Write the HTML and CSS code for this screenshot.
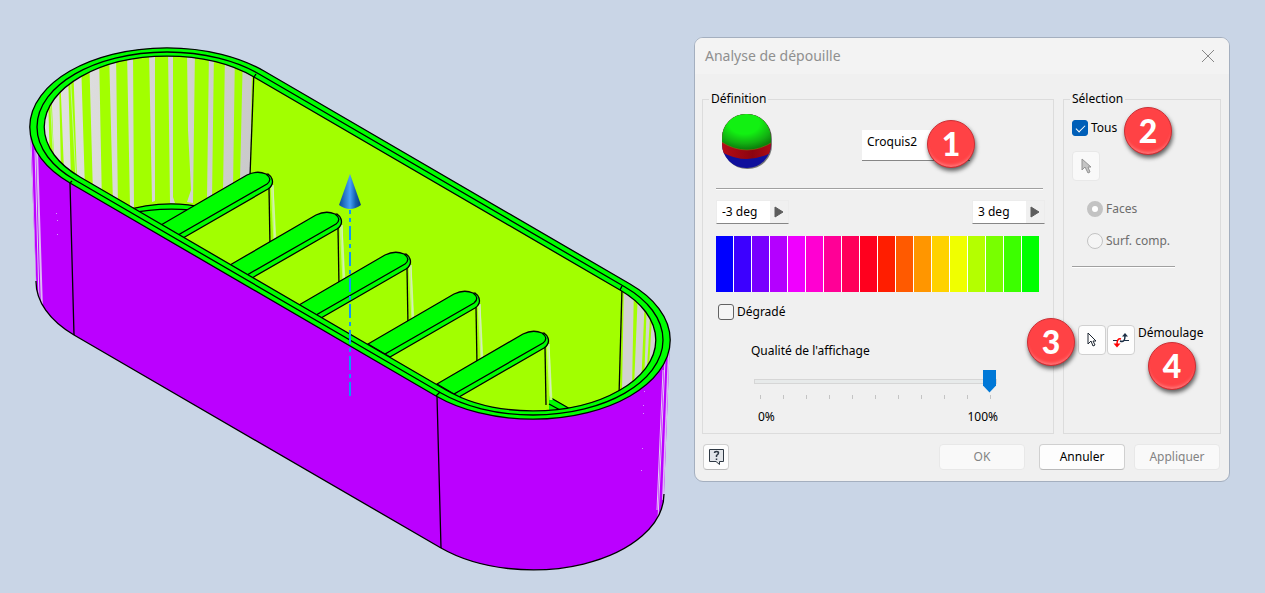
FILE: index.html
```
<!DOCTYPE html>
<html lang="fr">
<head>
    <meta charset="UTF-8">
    <title>Analyse de dépouille</title>
    <link rel="stylesheet" href="styles.css">
</head>
<body>
    <main class="workspace">
        <svg class="model" viewBox="0 0 694 592" preserveAspectRatio="xMinYMin meet" role="img" aria-label="Pièce">
            <defs>
                <clipPath id="inside">
                    <path d="M80 177A100 57.7 0 0 1 254 77L620 290A100 57.7 0 0 1 446 390Z"/>
                </clipPath>
                <clipPath id="skin">
                    <path d="M30 127L36 281A131 76 0 0 0 74 335L441 548A131 76 0 0 0 664 494L670 340Z"/>
                </clipPath>
                <linearGradient id="cone" x1="0" x2="1" y1="0" y2="0">
                    <stop offset="0" stop-color="#0a4a94"/>
                    <stop offset="0.5" stop-color="#45a0f8"/>
                    <stop offset="0.75" stop-color="#1560b0"/>
                    <stop offset="1" stop-color="#073a78"/>
                </linearGradient>
                <linearGradient id="bare" gradientUnits="userSpaceOnUse" x1="45" x2="250" y1="0" y2="0">
                    <stop offset="0" stop-color="#e2e2e2"/>
                    <stop offset="1" stop-color="#cacaca"/>
                </linearGradient>
                <g id="rib">
                    <path class="lime" d="M183 238L268 187L270 262L230 262Z"/>
                    <path d="M272 185L275 241" stroke="#c4ff70" stroke-width="3"/>
                    <path d="M273 185L275 238" stroke="#d5e8c8"/>
                    <path class="green edge" d="M178 235L183 238L268 189Q274 185 272 179Q271 176 268 174L258 177Z"/>
                    <path class="green edge" d="M161 225L247 175Q257 170 266 174Q273 179 267 184L178 235Z"/>
                    <path class="edge" d="M269 188L270 246"/>
                </g>
            </defs>

            <!-- outer skin -->
            <path fill="#bb00ff" d="M30 127L36 281A131 76 0 0 0 74 335L441 548A131 76 0 0 0 664 494L670 340Z"/>
            <g clip-path="url(#skin)" fill="none">
                <path d="M31 140L36 290M35 150L39 300" stroke="#e5ccf5"/>
                <path d="M37 150L42 310" stroke="#ddb8f5" stroke-width="2"/>
                <path d="M669 350L663 500" stroke="#ddb8f5" stroke-width="2"/>
                <path d="M665 360L658 520M663 370L657 510" stroke="#e5ccf5"/>
            </g>
            <path class="edge" d="M36 281A131 76 0 0 0 74 335L441 548A131 76 0 0 0 664 494"/>
            <path class="edge" d="M70 183L74 335M437 396L441 548"/>
            <path d="M56 213h1v1h-1zM57 220h1v1h-1zM57 234h1v1h-1zM644 391h1v1h-1zM643 405h1v1h-1zM643 413h1v1h-1zM642 448h1v1h-1zM641 470h1v1h-1z" fill="#d98cff"/>

            <!-- rim -->
            <path class="green edge" d="M70 183A100 57.7 0 0 1 264 71L630 284A100 57.7 0 0 1 436 396Z"/>
            <path class="lime" d="M80 177A100 57.7 0 0 1 254 77L620 290A100 57.7 0 0 1 446 390Z"/>

            <g clip-path="url(#inside)">
                <g fill="url(#bare)">
                    <path d="M43 90L48 90L50 170L44 170ZM51 80L59 80L61 172L54 160Z"/>
                    <path d="M60 70L68 70L71 180L64 172ZM73 60L81 60L85 190L77 180Z"/>
                    <path d="M89 50L99 50L102 205L93 195ZM109 50L116 50L118 210L113 205Z"/>
                    <path d="M127 50L133 50L134 207L130 207ZM149 50L155 50L155 201L152 202Z"/>
                    <path d="M168 50L173 50L173 197L175 203H170ZM187 50L195 50L193 203L187 202L191 190L188 130Z"/>
                    <path d="M209 50L214 50L212 200L207 200ZM225 50L235 50L233 190L223 195ZM243 50L252 70L250 176L240 180Z"/>
                </g>
                <path d="M70 70L76 180M50 90L54 170" fill="none" stroke="#bff59a"/>
                <path class="edge" d="M254 70L250 176"/>
                <path class="green edge" d="M120 212Q165 198 205 208L180 240Z"/>
                <path class="edge" d="M125 214Q160 207 190 210"/>
                <path d="M624 280L634 285L632 388L622 392ZM638 290L645 295L641 388L634 388ZM647 298H664L656 385L644 385Z" fill="#d2d2d2"/>
                <path d="M652 300L647 385" stroke="#a2ff00" stroke-width="2"/>
                <path class="edge" d="M622 288L619 396"/>
                <path class="green" d="M549 396L572 410H549Z"/>
                <path class="edge" d="M551 398L572 410M549 404L562 411"/>
                <use href="#rib"/>
                <use href="#rib" x="69" y="40"/>
                <use href="#rib" x="138" y="80"/>
                <use href="#rib" x="207" y="119"/>
                <use href="#rib" x="276" y="159"/>
            </g>

            <path class="edge" d="M80 177A100 57.7 0 0 1 254 77L620 290A100 57.7 0 0 1 446 390Z"/>
            <path class="edge" d="M75 180A100 57.7 0 0 1 259 74L625 287A100 57.7 0 0 1 441 393Z"/>
            <path class="edge" d="M254 77L256 74M620 290L622 286M70 183L72 181M436 396L440 392"/>

            <!-- pull direction -->
            <path d="M350 210V396" stroke="#0f96f5" stroke-width="2" stroke-dasharray="4 4 4 4 14 4 4 4 14 4 4 4 14 4 4 4 14 4 4 4 14 4 4 4 14 4 4 4 20"/>
            <path d="M350 174L339 205Q350 213 361 205Z" fill="url(#cone)"/>
        </svg>

        <form class="dialog">
            <header class="titlebar">
                <h1>Analyse de dépouille</h1>
                <button type="button" class="close" aria-label="Fermer">
                    <svg width="14" height="14" viewBox="0 0 14 14"><path d="M1 1L13 13M13 1L1 13" fill="none" stroke="#868686"/></svg>
                </button>
            </header>

            <div class="groups">
                <fieldset class="group definition">
                    <legend>Définition</legend>
                    <div class="source">
                        <svg width="54" height="58" viewBox="0 0 54 58" aria-hidden="true">
                            <defs>
                                <radialGradient id="top" cx="0.45" cy="0.3" r="0.7">
                                    <stop offset="0.4" stop-color="#12f012"/>
                                    <stop offset="0.75" stop-color="#12b012"/>
                                    <stop offset="1" stop-color="#0a7a0a"/>
                                </radialGradient>
                                <linearGradient id="band" x1="0" x2="1" y1="0" y2="0">
                                    <stop offset="0" stop-color="#b80c18"/>
                                    <stop offset="0.6" stop-color="#8c0410"/>
                                    <stop offset="1" stop-color="#b00c18"/>
                                </linearGradient>
                                <clipPath id="ball"><rect x="2" y="2" width="49" height="54" rx="24" ry="24"/></clipPath>
                            </defs>
                            <rect x="3" y="3" width="49" height="54" rx="24" ry="24" fill="#777"/>
                            <g clip-path="url(#ball)">
                                <path d="M0 0H54V58H0Z" fill="#10109c"/>
                                <path d="M0 0H54V39Q27 55 0 39Z" fill="url(#band)"/>
                                <path d="M0 0H54V29Q27 47 0 29Z" fill="url(#top)" stroke="#8a7a10" stroke-width="0.5"/>
                            </g>
                        </svg>
                        <div class="sketch">
                            <input type="text" class="sketch-name" aria-label="Esquisse" value="Croquis2">
                            <span class="badge badge-1">1</span>
                        </div>
                    </div>
                    <hr>
                    <div class="angles">
                        <div class="angle">
                            <input type="text" aria-label="Angle minimal" value="-3 deg">
                            <button type="button" aria-label="Options de l'angle minimal"><svg width="10" height="12" viewBox="0 0 10 12"><path d="M1 1L9 6L1 11Z" fill="#5c5c5c" stroke="#5c5c5c" stroke-linejoin="round"/></svg></button>
                        </div>
                        <div class="angle">
                            <input type="text" aria-label="Angle maximal" value="3 deg">
                            <button type="button" aria-label="Options de l'angle maximal"><svg width="10" height="12" viewBox="0 0 10 12"><path d="M1 1L9 6L1 11Z" fill="#5c5c5c" stroke="#5c5c5c" stroke-linejoin="round"/></svg></button>
                        </div>
                    </div>
                    <div class="spectrum">
                        <i style="background:#0000ff"></i>
                        <i style="background:#3c00ff"></i>
                        <i style="background:#7800ff"></i>
                        <i style="background:#b400ff"></i>
                        <i style="background:#f000ff"></i>
                        <i style="background:#ff00d2"></i>
                        <i style="background:#ff0096"></i>
                        <i style="background:#ff005a"></i>
                        <i style="background:#ff001e"></i>
                        <i style="background:#ff1e00"></i>
                        <i style="background:#ff5a00"></i>
                        <i style="background:#ff9600"></i>
                        <i style="background:#ffd200"></i>
                        <i style="background:#f0ff00"></i>
                        <i style="background:#b4ff00"></i>
                        <i style="background:#78ff00"></i>
                        <i style="background:#3cff00"></i>
                        <i style="background:#00ff00"></i>
                    </div>
                    <label class="option gradient"><input type="checkbox">Dégradé</label>
                    <div class="quality">
                        <label for="quality">Qualité de l'affichage</label>
                        <input type="range" id="quality" min="0" max="100" value="100">
                        <div class="ticks"><i></i><i></i><i></i><i></i><i></i><i></i><i></i><i></i><i></i><i></i><i></i></div>
                        <div class="scale"><span>0%</span><span>100%</span></div>
                    </div>
                </fieldset>

                <fieldset class="group selection">
                    <legend>Sélection</legend>
                    <div class="all">
                        <label class="option"><input type="checkbox" checked>Tous</label>
                        <span class="badge badge-2">2</span>
                    </div>
                    <button type="button" class="tool" disabled aria-label="Sélectionner les faces">
                        <svg width="12" height="18" viewBox="0 0 12 18"><path d="M2 2V13L5 10L8 16L10 15L8 10H11Z" fill="#c4c4c4" stroke="#949494"/></svg>
                    </button>
                    <div class="kinds">
                        <label class="option off"><input type="radio" name="kind" checked disabled>Faces</label>
                        <label class="option off"><input type="radio" name="kind" disabled>Surf. comp.</label>
                    </div>
                    <hr>
                    <div class="pull">
                        <span class="badge badge-3">3</span>
                        <button type="button" class="tool" aria-label="Direction de démoulage">
                            <svg width="12" height="18" viewBox="0 0 12 18"><path d="M2 2V13L5 10L7 15L9 14L7 10H10Z" fill="#fff" stroke="#1c2530"/></svg>
                        </button>
                        <button type="button" class="tool" aria-label="Inverser">
                            <svg width="18" height="18" viewBox="0 0 18 18">
                                <path d="M1 9.500H6M12 9.500H17" stroke="#1c2f45"/>
                                <path d="M8 10Q13 12 13 5" fill="none" stroke="#1c2f45" stroke-width="1.5"/>
                                <path d="M9 8Q5 7 5 13" fill="none" stroke="#f00" stroke-width="1.5"/>
                                <path d="M10 5.500L13 2L16 5.500Z" fill="#1c2f45"/>
                                <path d="M1.500 12.500H8.500L5 16.500Z" fill="#f00"/>
                            </svg>
                        </button>
                        <span class="pull-name">Démoulage</span>
                        <span class="badge badge-4">4</span>
                    </div>
                </fieldset>
            </div>

            <footer class="actions">
                <button type="button" class="help" aria-label="Aide">
                    <svg width="17" height="18" viewBox="0 0 17 18"><path d="M1.500 1.500H15.500V13.500H11.500V16.500L8 13.500H1.500Z" fill="#e3e6ea" stroke="#2f3944"/><path d="M6.500 5Q6.500 3.500 8.500 3.500Q10.500 3.500 10.500 5Q10.500 6 8.500 7.500V9M8.500 10.500V12" fill="none" stroke="#2f3944" stroke-width="1.500"/></svg>
                </button>
                <button type="submit" class="ok" disabled>OK</button>
                <button type="button">Annuler</button>
                <button type="button" disabled>Appliquer</button>
            </footer>
        </form>
    </main>
</body>
</html>
```
FILE: styles.css
```
* {
    box-sizing: border-box;
}

body {
    margin: 0;
    background: #c9d5e6;
    font-family: "Noto Sans", "Open Sans", sans-serif;
    font-size: 12px;
    line-height: 16px;
    color: #000;
}

button, input {
    font: inherit;
    color: inherit;
}

.workspace {
    display: flex;
    align-items: flex-start;
}

/* 3D view */
.model {
    flex: 1;
    min-width: 0;
}

.green {
    fill: #00ff00;
}

.lime {
    fill: #a2ff00;
}

.edge {
    stroke: #000;
    stroke-width: 1.3;
}

.edge:not(.green) {
    fill: none;
}

/* dialog window */
.dialog {
    flex: 0 0 536px;
    margin: 37px 35px 0 0;
    background: #f0f0f0;
    border: 1px solid #a4afbf;
    border-radius: 9px;
    overflow: hidden;
}

.titlebar {
    display: flex;
    align-items: center;
    justify-content: space-between;
    height: 36px;
    padding: 0 14px 0 10px;
    background: #f3f3f3;
}

.titlebar h1 {
    margin: 0;
    font-size: 14px;
    font-weight: normal;
    color: #8f8f8f;
}

.close {
    display: flex;
    padding: 0;
    border: none;
    background: none;
}

.groups {
    display: flex;
    gap: 9px;
    padding: 17px 8px 0 7px;
}

.group {
    min-width: 0;
    margin: 0;
    padding: 0;
    border: 1px solid #dcdcdc;
}

.group legend {
    padding: 0 2px;
}

.group hr {
    margin: 0;
    border: none;
    border-top: 1px solid #a0a0a0;
    border-bottom: 1px solid #fff;
}

.definition {
    flex: 1;
    padding: 5px 10px 8px 13px;
}

.definition legend {
    margin-left: -7px;
}

.selection {
    flex: 0 0 158px;
    padding: 13px 9px 0 8px;
}

.selection legend {
    margin-left: -2px;
}

.source {
    display: flex;
    justify-content: space-between;
    height: 76px;
    padding: 0 73px 0 4px;
}

.sketch {
    position: relative;
    padding-top: 18px;
}

.sketch-name {
    width: 108px;
    height: 31px;
    padding: 0 5px 8px;
    border: none;
    border-bottom: 1px solid #868686;
    background: #fff;
}

.angles {
    display: flex;
    justify-content: space-between;
    margin: 10px -2px 12px 0;
}

.angle {
    display: flex;
    width: 73px;
    height: 24px;
    border: 1px solid #ececec;
    border-bottom-color: #868686;
}

.angle input {
    flex: 1;
    min-width: 0;
    padding: 0 5px;
    border: none;
    background: #fff;
}

.angle button {
    display: flex;
    align-items: center;
    justify-content: center;
    width: 18px;
    padding: 0;
    border: none;
    background: #f0f0f0;
}

.spectrum {
    display: flex;
    gap: 1px;
    height: 56px;
    margin-right: 4px;
    background: #fff;
}

.spectrum i {
    flex: 1;
}

.option {
    display: flex;
    align-items: center;
    gap: 3px;
}

.option input {
    appearance: none;
    flex: none;
    width: 16px;
    height: 16px;
    margin: 0;
    border: 1px solid #626262;
    border-radius: 3px;
    background: #f5f5f5;
}

.option input[type="checkbox"]:checked {
    display: grid;
    place-items: center;
    border-color: #005fb8;
    background: #005fb8;
}

.option input[type="checkbox"]:checked::after {
    content: "";
    width: 8px;
    height: 4px;
    margin-bottom: 2px;
    border: solid #fff;
    border-width: 0 0 1px 1px;
    transform: rotate(-45deg);
}

.option input[type="radio"] {
    border-color: #c3c3c3;
    border-radius: 50%;
}

.option input[type="radio"]:checked {
    border-width: 5px;
    background: #fff;
}

.option.off {
    color: #6d6d6d;
}

.gradient {
    margin: 12px 0 0 2px;
}

.quality {
    display: flex;
    flex-direction: column;
    margin: 23px 46px 0 38px;
}

.quality label {
    margin-left: -3px;
}

.quality input {
    appearance: none;
    height: 24px;
    margin: 10px 0 2px;
    background: none;
}

.quality input::-webkit-slider-runnable-track {
    height: 5px;
    border: 1px solid #d6d6d6;
    background: #e7eaea;
}

.quality input::-webkit-slider-thumb {
    appearance: none;
    width: 13px;
    height: 23px;
    margin-top: -10px;
    background: #0078d7;
    clip-path: polygon(0 0, 100% 0, 100% 70%, 50% 100%, 0 70%);
}

.ticks {
    display: flex;
    justify-content: space-between;
    padding: 0 6px;
}

.ticks i {
    width: 1px;
    height: 4px;
    background: #c4c4c4;
}

.scale {
    display: flex;
    justify-content: space-between;
    margin: 10px -1px 0 4px;
}

.all {
    position: relative;
}

.tool {
    display: flex;
    align-items: center;
    justify-content: center;
    width: 28px;
    height: 30px;
    padding: 0;
    border: 1px solid #d0d0d0;
    border-radius: 4px;
    background: #fdfdfd;
}

.tool:disabled {
    border-color: #e8e8e8;
    background: #f9f9f9;
}

.all + .tool {
    margin-top: 15px;
}

.kinds {
    display: flex;
    flex-direction: column;
    gap: 16px;
    margin: 20px 0 17px 15px;
}

.selection hr {
    margin-right: 36px;
}

.pull {
    position: relative;
    display: flex;
    gap: 1px;
    margin: 57px 0 0 6px;
}

.pull-name {
    margin-left: 2px;
}

/* numbered callouts */
.badge {
    position: absolute;
    width: 48px;
    height: 48px;
    border: 1px solid #cc2f35;
    border-radius: 50%;
    background: #ff4245;
    box-shadow: 1px 3px 4px rgba(0, 0, 0, 0.6), inset 0 -4px 3px -2px #ff7477;
    color: #fff;
    font-family: Lato, "Open Sans", sans-serif;
    font-size: 32px;
    font-weight: 900;
    line-height: 46px;
    text-align: center;
}

.badge-1 {
    top: 8px;
    left: 65px;
}

.badge-2 {
    top: -13px;
    left: 52px;
}

.badge-3 {
    top: -7px;
    left: -51px;
}

.badge-4 {
    top: 17px;
    left: 70px;
}

.actions {
    display: flex;
    gap: 9px;
    padding: 10px 9px 11px 8px;
}

.actions button {
    width: 86px;
    height: 26px;
    padding: 0;
    border: 1px solid #d0d0d0;
    border-bottom-color: #bababa;
    border-radius: 4px;
    background: #fdfdfd;
}

.actions button:disabled {
    border-color: #e8e8e8;
    background: #f9f9f9;
    color: #838383;
}

.actions .help {
    display: flex;
    align-items: center;
    justify-content: center;
    width: 26px;
    margin-right: auto;
}

.actions .ok {
    margin-right: 5px;
}
```
